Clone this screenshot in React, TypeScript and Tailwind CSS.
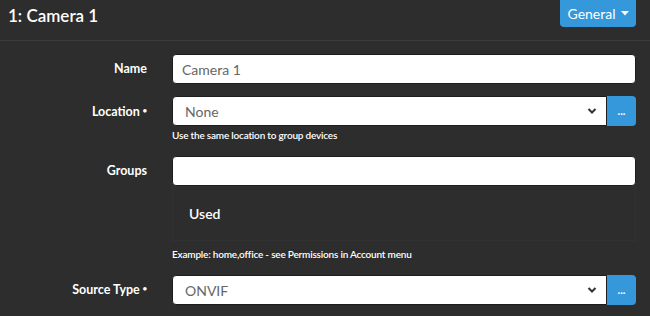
import React from 'react';

const Chevron: React.FC = () => (
    <svg width="10" height="7" viewBox="0 0 10 7" className="absolute right-[9px] top-1/2 -translate-y-1/2">
        <path d="M1.5 1.5 L5 5 L8.5 1.5" fill="none" stroke="#333" strokeWidth="2" />
    </svg>
);

const Label: React.FC<{ text: string; req?: boolean }> = ({ text, req }) => (
    <div className="w-[147px] shrink-0 text-right text-[12.5px] font-bold text-white leading-none">
        {text}
        {req && <span className="ml-[3px] text-[7px] align-[3px]">●</span>}
    </div>
);

const SelectRow: React.FC<{ value: string }> = ({ value }) => (
    <div className="flex">
        <div className="relative flex-1 h-[30px] bg-white rounded-l-[4px] border border-[#1c1c1c] flex items-center pl-[12px] text-[14px] text-[#666]">
            {value}
            <Chevron />
        </div>
        <button className="w-[29px] h-[30px] bg-[#3498db] rounded-r-[4px] text-white text-[11px] font-bold leading-none pb-[2px]">...</button>
    </div>
);

const App: React.FC = () => {
    return (
        <div className="w-[650px] h-[316px] overflow-hidden bg-[#2d2d2d] font-['Lato','Liberation_Sans',sans-serif]">
            <div className="h-[41px] flex justify-between border-b border-[#3d3d3d]">
                <h2 className="pl-[8px] pt-[3px] text-[17px] font-semibold text-white">1: Camera 1</h2>
                <button className="mr-[14px] w-[76px] h-[27px] bg-[#3498db] rounded-b-[4px] text-white text-[14px] flex items-center justify-center gap-[5px]">
                    General
                    <svg width="8" height="5" viewBox="0 0 8 5"><path d="M0 0 H8 L4 4.5 Z" fill="white" /></svg>
                </button>
            </div>
            <div className="pt-[13px] pr-[14px]">
                <div className="flex items-center">
                    <Label text="Name" />
                    <div className="ml-[25px] flex-1 h-[30px] bg-white rounded-[4px] border border-[#1c1c1c] flex items-center pl-[9px] text-[14px] text-[#666]">
                        Camera 1
                    </div>
                </div>
                <div className="flex mt-[12px]">
                    <div className="pt-[10px]"><Label text="Location" req /></div>
                    <div className="ml-[25px] flex-1">
                        <SelectRow value="None" />
                        <p className="mt-[2px] text-[10px] font-semibold text-white tracking-[-0.2px]">Use the same location to group devices</p>
                    </div>
                </div>
                <div className="flex mt-[13px]">
                    <div className="pt-[9px]"><Label text="Groups" /></div>
                    <div className="ml-[25px] flex-1">
                        <div className="h-[30px] bg-white rounded-[4px] border border-[#1c1c1c]" />
                        <div className="h-[55px] border border-[#313131] flex items-center pl-[16px] text-[14px] font-semibold text-white">Used</div>
                        <p className="mt-[6px] text-[10px] font-semibold text-white tracking-[-0.2px]">Example: home,office - see Permissions in Account menu</p>
                    </div>
                </div>
                <div className="flex items-center mt-[13px]">
                    <Label text="Source Type" req />
                    <div className="ml-[25px] flex-1">
                        <SelectRow value="ONVIF" />
                    </div>
                </div>
            </div>
        </div>
    );
};

export default App;
